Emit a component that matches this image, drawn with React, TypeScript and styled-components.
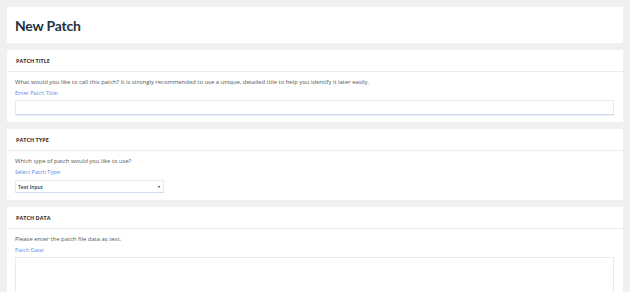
import React from "react";
import styled, { createGlobalStyle } from "styled-components";

const Global = createGlobalStyle`
  html, body { margin: 0; padding: 0; background: #f0f0f0; }
  body { font-family: "Open Sans", "Liberation Sans", sans-serif; }
  * { box-sizing: border-box; }
`;

const Page = styled.div`
  display: flex;
  flex-direction: column;
  gap: 7px;
  padding: 7px 7px 0 7px;
`;

const TitleCard = styled.div`
  background: #fff;
  height: 36px;
  display: flex;
  align-items: center;
  padding: 0 8px;
`;

const PageTitle = styled.h1`
  margin: 0;
  font-family: Lato, "Open Sans", sans-serif;
  font-size: 14px;
  font-weight: 700;
  color: #22313f;
  letter-spacing: -0.2px;
`;

const Card = styled.section`
  background: #fff;
`;

const CardHeader = styled.div`
  height: 22px;
  display: flex;
  align-items: center;
  padding: 0 9px;
  border-bottom: 1px solid #ececec;
  font-size: 5.5px;
  font-weight: 700;
  text-transform: uppercase;
  color: #2e3338;
`;

const CardBody = styled.div`
  padding: 5px 9px 7px 8px;
  display: flex;
  flex-direction: column;
`;

const Desc = styled.p`
  margin: 0;
  font-size: 5.9px;
  line-height: 10px;
  color: #555;
`;

const Label = styled.label`
  margin-top: 2px;
  font-size: 5.5px;
  line-height: 8px;
  color: #5b8ae6;
`;

const TextInput = styled.input`
  margin-top: 3px;
  height: 15px;
  width: 100%;
  border: 1px solid #e3ebf5;
  border-bottom-color: #cfdcee;
  border-radius: 1px;
  background: #fff;
  outline: none;
  box-shadow: 0 1px 0 rgba(180, 200, 230, 0.25);
`;

const SelectBox = styled.div`
  margin-top: 4px;
  height: 13px;
  width: 149px;
  border: 1px solid #e3ebf5;
  border-bottom-color: #cfdcee;
  display: flex;
  align-items: center;
  justify-content: space-between;
  padding: 0 3px 0 2px;
  font-size: 5px;
  font-weight: 600;
  color: #333;
`;

const Caret = styled.span`
  width: 0;
  height: 0;
  border-left: 1.5px solid transparent;
  border-right: 1.5px solid transparent;
  border-top: 2px solid #333;
`;

const TextArea = styled.textarea`
  margin-top: 3px;
  height: 70px;
  width: 100%;
  border: 1px solid #e3ebf5;
  resize: none;
  outline: none;
  background: #fff;
`;

export default function App() {
  return (
    <>
      <Global />
      <Page>
        <TitleCard>
          <PageTitle>New Patch</PageTitle>
        </TitleCard>
        <Card>
          <CardHeader>Patch Title</CardHeader>
          <CardBody>
            <Desc>
              What would you like to call this patch? It is strongly recommended to use a unique, detailed title to help you identify it later easily.
            </Desc>
            <Label>Enter Patch Title:</Label>
            <TextInput />
          </CardBody>
        </Card>
        <Card>
          <CardHeader>Patch Type</CardHeader>
          <CardBody>
            <Desc>Which type of patch would you like to use?</Desc>
            <Label>Select Patch Type:</Label>
            <SelectBox>
              <span>Text Input</span>
              <Caret />
            </SelectBox>
          </CardBody>
        </Card>
        <Card>
          <CardHeader>Patch Data</CardHeader>
          <CardBody>
            <Desc>Please enter the patch file data as text.</Desc>
            <Label>Patch Data:</Label>
            <TextArea />
          </CardBody>
        </Card>
      </Page>
    </>
  );
}
